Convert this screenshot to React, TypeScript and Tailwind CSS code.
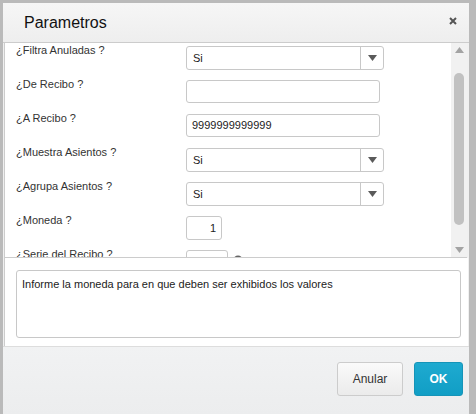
import React from "react";

const font = "font-['Liberation_Sans',Arial,sans-serif]";

function Arrow({ up = false, color = "#555" }: { up?: boolean; color?: string }) {
  return (
    <svg width="9" height="6" viewBox="0 0 9 6">
      <path d={up ? "M0 6 L4.5 0 L9 6 Z" : "M0 0 L9 0 L4.5 6 Z"} fill={color} />
    </svg>
  );
}

function Select({ value }: { value: string }) {
  return (
    <div className="flex h-[24px] w-[198px] items-stretch rounded-[3px] border border-[#c8c8c8] bg-white">
      <div className="flex flex-1 items-center pl-[6px] text-[11px] text-[#222]">{value}</div>
      <div className="flex w-[23px] items-center justify-center border-l border-[#c8c8c8]">
        <Arrow color="#5a5a5a" />
      </div>
    </div>
  );
}

function Input({ value = "", w, right = false }: { value?: string; w: string; right?: boolean }) {
  return (
    <div
      className={`flex h-[23px] items-center rounded-[3px] border border-[#c8c8c8] bg-white px-[5px] text-[11px] text-[#222] ${w} ${
        right ? "justify-end" : ""
      }`}
    >
      {value}
    </div>
  );
}

const rows: { label: string; field: React.ReactNode }[] = [
  { label: "¿Filtra Anuladas ?", field: <Select value="Si" /> },
  { label: "¿De Recibo ?", field: <Input w="w-[194px]" /> },
  { label: "¿A Recibo ?", field: <Input w="w-[194px]" value="9999999999999" /> },
  { label: "¿Muestra Asientos ?", field: <Select value="Si" /> },
  { label: "¿Agrupa Asientos ?", field: <Select value="Si" /> },
  { label: "¿Moneda ?", field: <Input w="w-[36px] h-[24px]" value="1" right /> },
  {
    label: "¿Serie del Recibo ?",
    field: (
      <div className="flex items-start gap-[5px]">
        <Input w="w-[42px]" />
        <svg width="11" height="11" viewBox="0 0 11 11" className="mt-[5px]">
          <circle cx="5" cy="5" r="3.8" fill="none" stroke="#666" strokeWidth="1.5" />
          <path d="M7.8 7.8 L10.5 10.5" stroke="#666" strokeWidth="1.6" />
        </svg>
      </div>
    ),
  },
];

export default function App() {
  return (
    <div className={`h-[414px] w-[476px] overflow-hidden bg-[#bababa] pl-[3px] pt-[3px] ${font}`}>
      <div className="flex h-[411px] w-[466px] flex-col bg-[#f0f0f0]">
        {/* Header */}
        <div className="flex h-[40px] shrink-0 items-center justify-between border-b border-[#cccccc] bg-gradient-to-b from-[#f6f6f6] to-[#eeeeee] pl-[21px] pr-[12px]">
          <span className="text-[16px] text-[#111]">Parametros</span>
          <svg width="8" height="8" viewBox="0 0 8 8" className="mt-[-4px]">
            <path d="M1 1 L7 7 M7 1 L1 7" stroke="#555" strokeWidth="2" />
          </svg>
        </div>

        {/* Scroll panel */}
        <div className="ml-[1px] mr-[2px] flex h-[215px] shrink-0 border-b border-l border-[#cccccc] bg-white">
          <div className="flex flex-1 flex-col overflow-hidden pl-[11px] pt-[3px]">
            {rows.map((r) => (
              <div key={r.label} className="flex h-[34px] shrink-0 items-start">
                <div className="-mt-[2px] w-[170px] shrink-0 text-[11px] leading-[13px] text-[#333]">{r.label}</div>
                {r.field}
              </div>
            ))}
          </div>
          <div className="flex w-[16px] shrink-0 flex-col items-center bg-[#f1f1f1] py-[4px]">
            <Arrow up color="#a3a3a3" />
            <div className="mt-[20px] h-[152px] w-[10px] rounded-full bg-[#c1c1c1]" />
            <div className="flex-1" />
            <Arrow color="#a3a3a3" />
          </div>
        </div>

        {/* Description */}
        <div className="ml-[1px] mr-[1px] h-[88px] shrink-0 border-l border-[#cccccc] bg-white pl-[11px] pt-[12px]">
          <div className="h-[68px] w-[445px] rounded-[3px] border border-[#c8c8c8] px-[5px] pt-[5px] text-[11px] text-[#222]">
            Informe la moneda para en que deben ser exhibidos los valores
          </div>
        </div>

        {/* Footer */}
        <div className="flex flex-1 items-start justify-end gap-[11px] border-t border-[#dddddd] bg-gradient-to-b from-[#f1f2f3] to-[#ecedee] pr-[6px] pt-[15px]">
          <button className="h-[34px] w-[66px] rounded-[3px] border border-[#cccccc] bg-gradient-to-b from-[#fafafa] to-[#ebebeb] text-[12px] text-[#333]">
            Anular
          </button>
          <button className="h-[34px] w-[49px] rounded-[3px] border border-[#1594b8] bg-gradient-to-b from-[#1eaad0] to-[#109ec5] text-[12px] font-bold text-white">
            OK
          </button>
        </div>
      </div>
    </div>
  );
}
